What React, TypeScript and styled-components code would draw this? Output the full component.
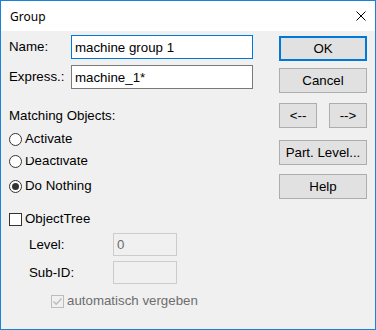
import React from "react";
import styled, { createGlobalStyle } from "styled-components";

const GlobalStyle = createGlobalStyle`
  html, body { margin: 0; padding: 0; background: #ffffff; }
  body {
    font-family: "Liberation Sans", Arial, sans-serif;
    font-size: 13.3px;
    color: #000000;
  }
  * { box-sizing: border-box; }
`;

const Window = styled.div`
  width: 376px;
  height: 330px;
  border: 1px solid #1883d7;
  background: #f0f0f0;
  display: flex;
  flex-direction: column;
`;

const TitleBar = styled.div`
  height: 30px;
  flex: none;
  background: #ffffff;
  display: flex;
  align-items: center;
  justify-content: space-between;
  padding: 0 9px 0 9px;
  font-family: "Noto Sans", "Open Sans", sans-serif;
  font-size: 12px;
  color: #000;
`;

const Body = styled.div`
  flex: 1;
  display: flex;
  justify-content: space-between;
  padding: 0 8px;
`;

const LeftCol = styled.div`
  width: 244px;
  display: flex;
  flex-direction: column;
`;

const RightCol = styled.div`
  width: 88px;
  display: flex;
  flex-direction: column;
`;

const FieldRow = styled.div<{ $top: number; $indent?: number; $h?: number }>`
  display: flex;
  align-items: center;
  height: ${(p) => p.$h ?? 24}px;
  margin-top: ${(p) => p.$top}px;
  padding-left: ${(p) => p.$indent ?? 0}px;
`;

const FieldLabel = styled.span<{ $w: number }>`
  width: ${(p) => p.$w}px;
  flex: none;
  line-height: 16px;
`;

const TextBox = styled.input<{ $w: number; $focused?: boolean }>`
  width: ${(p) => p.$w}px;
  height: 100%;
  margin: 0;
  padding: 0 3px;
  border: 1px solid ${(p) => (p.$focused ? "#0078d7" : "#7a7a7a")};
  background: #ffffff;
  font: inherit;
  color: #000;
  outline: none;
  &:disabled {
    border-color: #cccccc;
    background: #f0f0f0;
    color: #6d6d6d;
  }
`;

const SectionLabel = styled.div<{ $top: number }>`
  margin-top: ${(p) => p.$top}px;
  height: 16px;
  line-height: 16px;
`;

const OptionRow = styled.div<{ $top: number; $indent?: number; $disabled?: boolean }>`
  margin-top: ${(p) => p.$top}px;
  padding-left: ${(p) => p.$indent ?? 0}px;
  height: 16px;
  display: flex;
  align-items: center;
  gap: 3px;
  line-height: 16px;
  color: ${(p) => (p.$disabled ? "#6d6d6d" : "#000")};
`;

const RadioCircle = styled.span<{ $checked?: boolean }>`
  width: 13px;
  height: 13px;
  flex: none;
  border: 1px solid #333333;
  border-radius: 50%;
  background: #ffffff;
  display: flex;
  align-items: center;
  justify-content: center;
  &::after {
    content: "";
    display: ${(p) => (p.$checked ? "block" : "none")};
    width: 7px;
    height: 7px;
    border-radius: 50%;
    background: #333333;
  }
`;

const CheckBox = styled.span<{ $disabled?: boolean }>`
  width: 13px;
  height: 13px;
  flex: none;
  border: 1px solid ${(p) => (p.$disabled ? "#bcbcbc" : "#333333")};
  background: ${(p) => (p.$disabled ? "#f0f0f0" : "#ffffff")};
  display: flex;
  align-items: center;
  justify-content: center;
`;

const ClippedLabel = styled.span`
  display: block;
  height: 8px;
  overflow: hidden;
  line-height: 16px;
`;

const ClippedInner = styled.span`
  display: block;
  margin-top: -4px;
`;

const Button = styled.button<{ $top?: number; $default?: boolean; $w?: number }>`
  width: ${(p) => p.$w ?? 88}px;
  height: 25px;
  margin: ${(p) => p.$top ?? 0}px 0 0 0;
  padding: 0;
  background: #e1e1e1;
  border: ${(p) => (p.$default ? "2px solid #0078d7" : "1px solid #adadad")};
  font: inherit;
  color: #000;
  text-align: center;
  flex: none;
`;

const ArrowRow = styled.div<{ $top: number }>`
  margin-top: ${(p) => p.$top}px;
  display: flex;
  justify-content: space-between;
`;

export default function App() {
  return (
    <>
      <GlobalStyle />
      <Window>
        <TitleBar>
          <span>Group</span>
          <svg width="10" height="10" viewBox="0 0 10 10">
            <path d="M0.5 0.5 L9.5 9.5 M9.5 0.5 L0.5 9.5" stroke="#000" strokeWidth="1" fill="none" />
          </svg>
        </TitleBar>
        <Body>
          <LeftCol>
            <FieldRow $top={4}>
              <FieldLabel $w={62}>Name:</FieldLabel>
              <TextBox $w={182} $focused readOnly value="machine group 1" />
            </FieldRow>
            <FieldRow $top={6}>
              <FieldLabel $w={62}>Express.:</FieldLabel>
              <TextBox $w={182} readOnly value="machine_1*" />
            </FieldRow>
            <SectionLabel $top={19}>Matching Objects:</SectionLabel>
            <OptionRow $top={7}>
              <RadioCircle />
              <span>Activate</span>
            </OptionRow>
            <OptionRow $top={6}>
              <RadioCircle />
              <ClippedLabel>
                <ClippedInner>Deactivate</ClippedInner>
              </ClippedLabel>
            </OptionRow>
            <OptionRow $top={9}>
              <RadioCircle $checked />
              <span>Do Nothing</span>
            </OptionRow>
            <OptionRow $top={17}>
              <CheckBox />
              <span>ObjectTree</span>
            </OptionRow>
            <FieldRow $top={6} $indent={20} $h={23}>
              <FieldLabel $w={84}>Level:</FieldLabel>
              <TextBox $w={64} disabled value="0" readOnly />
            </FieldRow>
            <FieldRow $top={5} $indent={20} $h={23}>
              <FieldLabel $w={84}>Sub-ID:</FieldLabel>
              <TextBox $w={64} disabled value="" readOnly />
            </FieldRow>
            <OptionRow $top={9} $indent={42} $disabled>
              <CheckBox $disabled>
                <svg width="11" height="11" viewBox="0 0 11 11">
                  <path d="M1.5 5.5 L4.2 8.3 L9.5 2.5" stroke="#bcbcbc" strokeWidth="1.4" fill="none" />
                </svg>
              </CheckBox>
              <span>automatisch vergeben</span>
            </OptionRow>
          </LeftCol>
          <RightCol>
            <Button $top={5} $default>OK</Button>
            <Button $top={7}>Cancel</Button>
            <ArrowRow $top={10}>
              <Button $w={38}>&lt;--</Button>
              <Button $w={38}>--&gt;</Button>
            </ArrowRow>
            <Button $top={12}>Part. Level...</Button>
            <Button $top={9}>Help</Button>
          </RightCol>
        </Body>
      </Window>
    </>
  );
}
